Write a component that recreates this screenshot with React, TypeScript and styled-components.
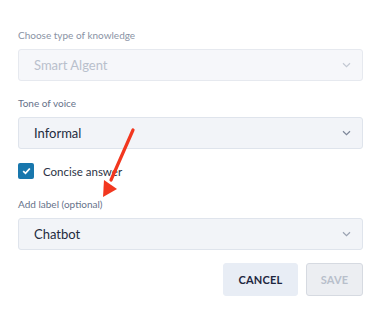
import React from "react";
import styled, { createGlobalStyle } from "styled-components";

const Global = createGlobalStyle`
  html, body { margin: 0; padding: 0; background: #ffffff; }
  body { font-family: Lato, "Open Sans", sans-serif; -webkit-font-smoothing: antialiased; }
`;

const Page = styled.div`
  position: relative;
  width: 380px;
  height: 312px;
  box-sizing: border-box;
  padding: 28px 17px 0 18px;
  display: flex;
  flex-direction: column;
`;

const Field = styled.div<{ $gap?: number }>`
  display: flex;
  flex-direction: column;
  gap: 7px;
  margin-bottom: ${(p) => p.$gap ?? 15}px;
`;

const Label = styled.div<{ $muted?: boolean }>`
  font-size: 10px;
  line-height: 14px;
  color: ${(p) => (p.$muted ? "#8a93a5" : "#66728a")};
`;

const Select = styled.div<{ $disabled?: boolean }>`
  height: 32px;
  box-sizing: border-box;
  border: 1px solid ${(p) => (p.$disabled ? "#e6e9ef" : "#dfe4ec")};
  border-radius: 3px;
  background: ${(p) => (p.$disabled ? "#f6f7fa" : "#f2f4f8")};
  display: flex;
  align-items: center;
  justify-content: space-between;
  padding: 0 11px 0 15px;
  font-size: 13px;
  color: ${(p) => (p.$disabled ? "#b9c0cc" : "#232b3d")};
`;

const CheckRow = styled.div`
  display: flex;
  align-items: center;
  gap: 9px;
  height: 16px;
  margin: 0 0 18px 0;
  font-size: 11.5px;
  color: #2b3345;
`;

const Box = styled.div`
  width: 16px;
  height: 16px;
  border-radius: 2px;
  background: #1877ad;
  display: flex;
  align-items: center;
  justify-content: center;
`;

const Actions = styled.div`
  display: flex;
  justify-content: flex-end;
  gap: 8px;
  margin-top: 13px;
`;

const Button = styled.button<{ $primary?: boolean }>`
  height: 33px;
  box-sizing: border-box;
  border-radius: 3px;
  font-family: Lato, sans-serif;
  font-weight: 700;
  font-size: 11px;
  letter-spacing: 0.2px;
  padding: 0;
  width: ${(p) => (p.$primary ? "57px" : "75px")};
  border: 1px solid ${(p) => (p.$primary ? "#d6dae1" : "#e8edf5")};
  background: ${(p) => (p.$primary ? "#eceef2" : "#e8edf5")};
  color: ${(p) => (p.$primary ? "#b8bfcb" : "#1d2640")};
`;

const ArrowLayer = styled.svg`
  position: absolute;
  left: 0;
  top: 0;
  pointer-events: none;
`;

const Chevron = ({ color }: { color: string }) => (
  <svg width="9" height="6" viewBox="0 0 9 6">
    <path d="M1 1.2 L4.5 4.6 L8 1.2" fill="none" stroke={color} strokeWidth="1.2" />
  </svg>
);

export default function App() {
  return (
    <>
      <Global />
      <Page>
        <Field>
          <Label $muted>Choose type of knowledge</Label>
          <Select $disabled>
            Smart Algent
            <Chevron color="#c3c9d3" />
          </Select>
        </Field>
        <Field $gap={14}>
          <Label>Tone of voice</Label>
          <Select>
            Informal
            <Chevron color="#7d8699" />
          </Select>
        </Field>
        <CheckRow>
          <Box>
            <svg width="9" height="8" viewBox="0 0 9 8">
              <path d="M1.2 4.2 L3.5 6.3 L7.8 1.5" fill="none" stroke="#fff" strokeWidth="1.8" />
            </svg>
          </Box>
          Concise answer
        </CheckRow>
        <Field $gap={0}>
          <Label>Add label (optional)</Label>
          <Select>
            Chatbot
            <Chevron color="#9aa2b2" />
          </Select>
        </Field>
        <Actions>
          <Button>CANCEL</Button>
          <Button $primary>SAVE</Button>
        </Actions>
        <ArrowLayer width="380" height="312" viewBox="0 0 380 312">
          <line x1="133" y1="130" x2="111" y2="180" stroke="#f2371f" strokeWidth="3.2" strokeLinecap="round" />
          <polygon points="103,197 104,180 117,189" fill="#f2371f" />
        </ArrowLayer>
      </Page>
    </>
  );
}
